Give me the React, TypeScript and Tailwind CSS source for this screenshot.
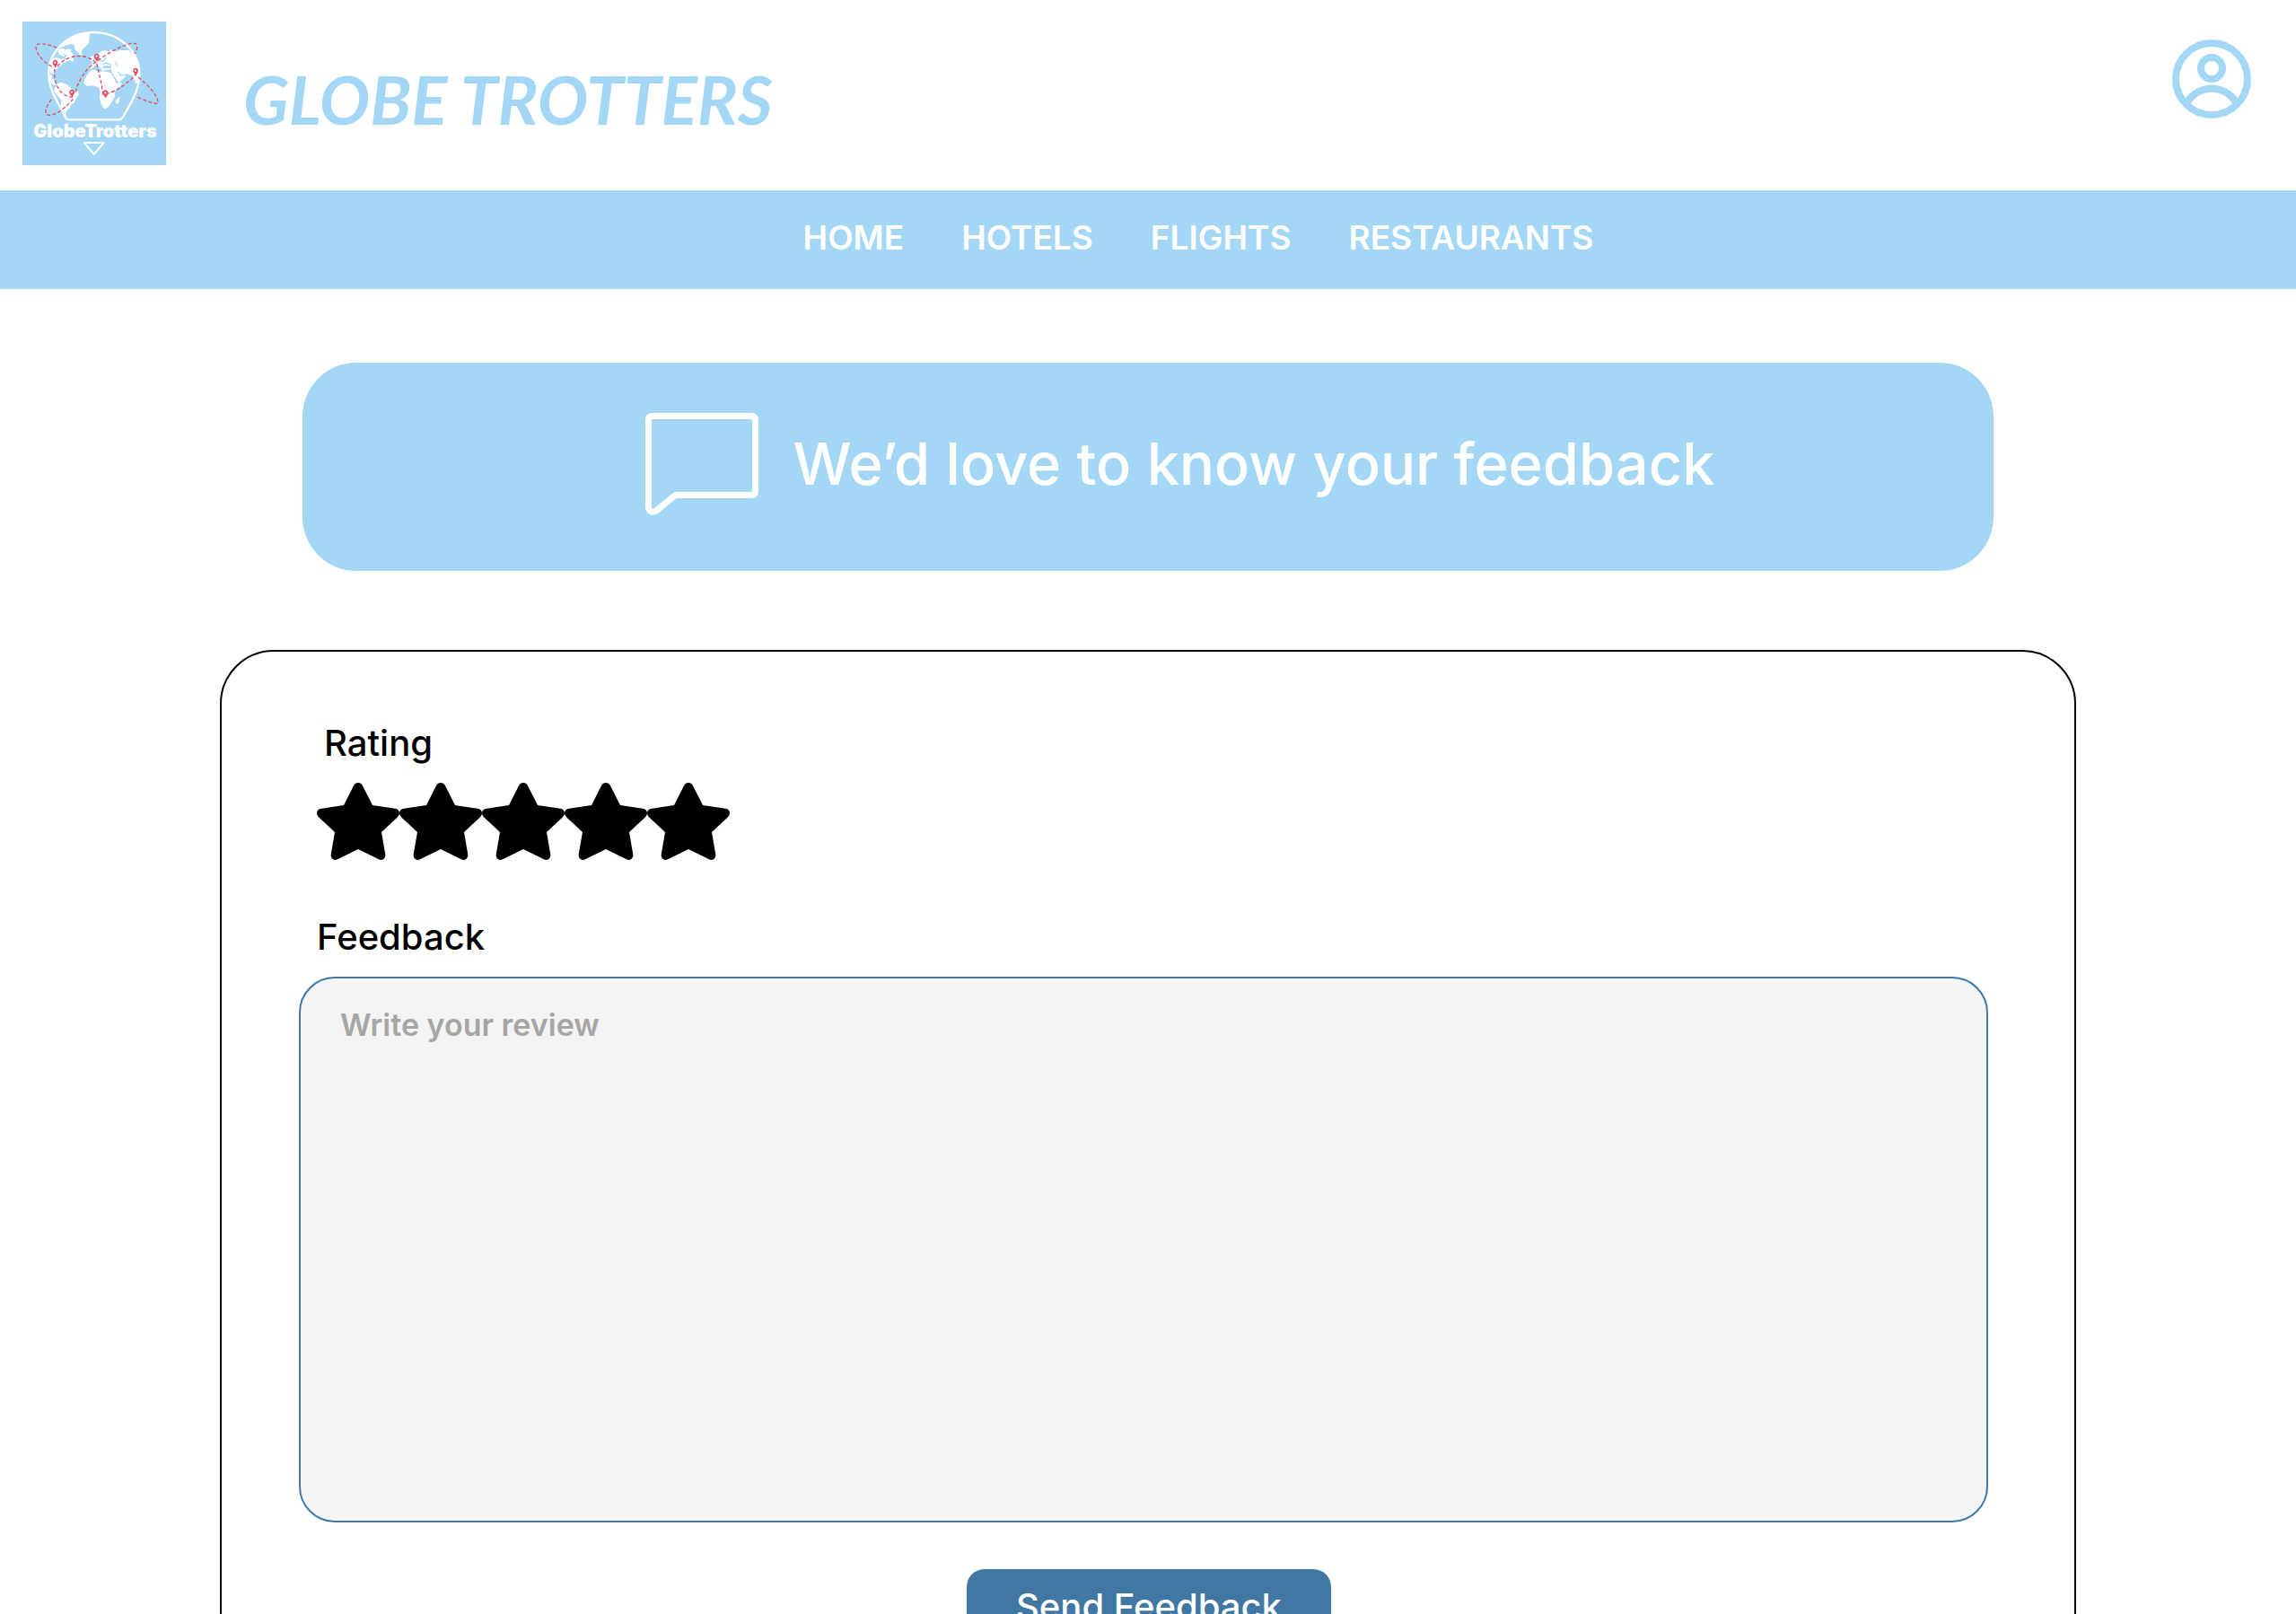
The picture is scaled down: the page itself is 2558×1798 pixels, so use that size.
import { useState } from "react";

const navItems = ["HOME", "HOTELS", "FLIGHTS", "RESTAURANTS"];

const globeOutline =
  "M313 108C228 108 163 172 163 245C163 272 171 302 186 330L218 390Q223 400 231 400H397Q405 400 409 394L442 336C456 308 466 280 466 245C466 172 398 108 313 108Z";

const routes = [
  "M190 159C155 146 120 140 120 156C123 186 150 212 178 224",
  "M192 222C225 180 285 178 316 206",
  "M183 230C178 270 192 318 242 325",
  "M252 308C265 260 295 222 325 204C370 170 435 138 454 146C462 154 458 168 450 180",
  "M323 212C333 250 342 290 345 322",
  "M354 314C390 306 430 276 452 250",
  "M462 258C502 290 531 325 528 345C520 350 480 335 453 321",
  "M172 332C150 360 145 385 165 385C190 385 225 355 245 330",
];

const pins = [
  [184, 210],
  [323, 189],
  [453, 237],
  [240, 309],
  [352, 311],
];

function Logo() {
  return (
    <svg viewBox="0 0 160 160" className="size-40 shrink-0 bg-[#a4d7f6]" role="img" aria-label="GlobeTrotters">
      <g transform="translate(-25 -24) scale(.3333)">
        <clipPath id="globe">
          <path d={globeOutline} />
        </clipPath>
        <g clipPath="url(#globe)" fill="#fff">
          <path d="M200 158L235 108H300L299 128L296 146L285 156L276 164L270 180L262 177L252 166L248 152L244 147L222 151L205 158Z" />
          <path d="M196 164l14-3 8 5 12-4 10 5-6 7 10 4-8 7-14-2-8 6-14-6-6-8zM226 180l12-3 9 7-6 7 5 6-2 9-12-4-10 5-12 4-6 8-8 4-6 9-12 4 4 7-8 2-6-3v-38l18-12 22 6 10-4z" />
          <path d="M160 250L172 249L173 262L183 266L180 274L188 280L182 285L172 278L160 270Z" />
          <path d="M188 283L205 275L222 281L236 293L240 302L262 307L263 318L254 328L248 344L238 349L234 360L225 367L219 378L222 392L205 370L204 334L190 318L180 302Z" />
          <path d="M284 262L302 236L316 233L330 240L346 238L358 241L372 244L389 278L407 276L402 288L383 306V324L371 345L360 360L348 364L339 350L333 328L335 304L328 290L308 286L292 288L280 278Z" />
          <path d="M396 326L401 323L399 338L393 348L387 344L388 334Z" />
          <path d="M298 228L300 216L312 213L306 206L318 200L328 206L334 196L326 186L334 174L346 168L364 172L368 166L386 172L400 168L430 168L446 182L470 200V265L454 280L444 254L430 248L420 246L418 258L398 276L384 262L376 246L372 232L358 234L342 236L330 228L326 216L316 220L308 230Z" />
          <path d="M302 190l8-4 4 10-4 8-8-1 3-6zM262 180l8-3 6 4-8 4z" />
        </g>
        <g fill="none" stroke="#a4d7f6" strokeWidth="4">
          <path d="M340 216l14-6 18 7M386 206l6 16M330 200l16 4 8-12M372 244l18 28M394 240l10 12 14-2M324 218l16 13" />
          <path d="M344 224H372" strokeWidth="8" />
          <path d="M210 180l16 8M222 196l-14 8M252 312l-12-6" strokeWidth="3" />
        </g>
        <path d={globeOutline} fill="none" stroke="#fff" strokeWidth="7" />
        <g fill="none" stroke="#e04c62" strokeWidth="4" strokeDasharray="12 7">
          {routes.map((d) => (
            <path key={d} d={d} />
          ))}
        </g>
        {pins.map(([x, y]) => (
          <g key={x} transform={`translate(${x} ${y})`}>
            <path d="M0-10C6-10 9-5 9 0C9 6 4 9 2 17C-1 11-8 6-8 0C-8-5-5-10 0-10Z" fill="#e04c62" />
            <circle r="3.5" cy="-1" fill="#fff" />
          </g>
        ))}
        <path d="M281 477H347L314 515Z" fill="none" stroke="#fff" strokeWidth="6" strokeLinejoin="round" />
      </g>
      <text x="81" y="129" textAnchor="middle" fill="#fff" className="font-['Inter',sans-serif] text-[20px] font-black">
        GlobeTrotters
      </text>
    </svg>
  );
}

function Star({ filled }: { filled: boolean }) {
  return (
    <svg viewBox="0 0 276 258" className="block w-[92px]" aria-hidden="true">
      <path
        d="M123 10Q128 0 138 0Q148 0 153 10L186 75L261 86Q276 88 276 102Q276 109 270 115L216 165L229 240Q230 250 223 255Q216 260 207 256L138 222L69 256Q60 260 53 255Q46 250 47 240L60 165L6 115Q0 109 0 102Q0 88 15 86L90 75Z"
        fill={filled ? "#000" : "#d1d5db"}
      />
    </svg>
  );
}

export default function App() {
  const [rating, setRating] = useState(5);
  return (
    <div className="h-screen overflow-hidden bg-white font-['Inter',sans-serif] text-black">
      <header className="flex items-start pt-6 pr-[50px] pb-7 pl-[25px]">
        <Logo />
        <h1 className="ml-[86px] pt-10 font-['Lato',sans-serif] text-[75px] leading-[92px] font-bold text-[#a4d7f6] italic">
          GLOBE TROTTERS
        </h1>
        <button type="button" aria-label="Account" className="mt-5 ml-auto">
          <svg viewBox="-44 -44 88 88" className="size-[88px]" fill="none" stroke="#a4d7f6" strokeWidth="8">
            <circle r="40" />
            <circle r="12" cy="-12" />
            <path d="M-27 25.500A32 32 0 0 1 27 25.500" />
          </svg>
        </button>
      </header>

      <nav className="flex justify-center gap-16 bg-[#a4d7f6] pt-7 pb-8 pl-[112px] text-[37px] leading-[50px] font-semibold text-white">
        {navItems.map((item) => (
          <a key={item} href="#">
            {item}
          </a>
        ))}
      </nav>

      <section className="mx-auto mt-[82px] flex h-[232px] w-full max-w-[1884px] items-center justify-center gap-[38px] rounded-[60px] bg-[#a4d7f6] pb-1.5 pl-[72px] text-white">
        <svg viewBox="0 0 126 114" className="w-[126px] shrink-0" fill="none" stroke="currentColor" strokeWidth="7" strokeLinejoin="round" aria-hidden="true">
          <path d="M8 3.500H118Q122.500 3.500 122.500 8V87Q122.500 91.500 118 91.500H33.500L12 109Q9 111 6 109.500Q3.500 108 3.500 105V8Q3.500 3.500 8 3.500Z" />
        </svg>
        <h2 className="text-[65px] leading-[80px] font-medium">We’d love to know your feedback</h2>
      </section>

      <form className="mx-auto mt-[88px] flex w-full max-w-[2068px] flex-col rounded-[60px] border-2 border-black pt-[78px] pr-24 pb-20 pl-[86px]">
        <h3 id="rating-label" className="ml-7 text-[40px] leading-[48px] font-medium">
          Rating
        </h3>
        <div role="group" aria-labelledby="rating-label" className="mt-5 ml-5 flex">
          {[1, 2, 3, 4, 5].map((n) => (
            <button key={n} type="button" aria-label={`${n} stars`} onClick={() => setRating(n)}>
              <Star filled={n <= rating} />
            </button>
          ))}
        </div>
        <label htmlFor="feedback" className="mt-[62px] ml-5 text-[40px] leading-[48px] font-medium">
          Feedback
        </label>
        <textarea
          id="feedback"
          placeholder="Write your review"
          className="mt-5 h-[608px] resize-none rounded-[40px] border-2 border-[#4077a3] bg-[#f4f4f4] px-11 py-8 text-[34px] leading-10 font-semibold placeholder:text-[#a6a6a6]"
        />
        <button type="button" className="mt-[52px] ml-3 self-center rounded-[20px] bg-[#4077a3] px-[55px] py-[18px] text-[40px] leading-[48px] font-medium text-white">
          Send Feedback
        </button>
      </form>
    </div>
  );
}
